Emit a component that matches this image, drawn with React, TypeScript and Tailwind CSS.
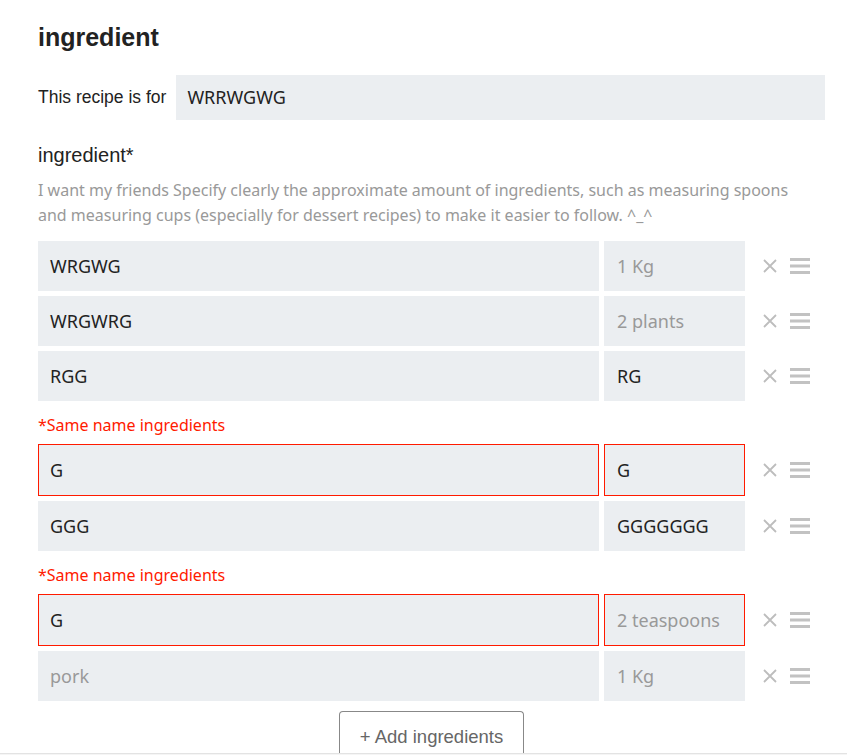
import React from "react";

type Row = {
  name: string;
  amount: string;
  namePlaceholder?: boolean;
  amountPlaceholder?: boolean;
  error?: boolean;
};

const rows: Row[] = [
  { name: "WRGWG", amount: "1 Kg", amountPlaceholder: true },
  { name: "WRGWRG", amount: "2 plants", amountPlaceholder: true },
  { name: "RGG", amount: "RG" },
  { name: "G", amount: "G", error: true },
  { name: "GGG", amount: "GGGGGGG" },
  { name: "G", amount: "2 teaspoons", amountPlaceholder: true, error: true },
  { name: "pork", amount: "1 Kg", namePlaceholder: true, amountPlaceholder: true },
];

function IngredientRow({ row }: { row: Row }) {
  const box = row.error
    ? "h-[52px] border border-[#ff1a00]"
    : "h-[50px] border border-transparent";
  return (
    <div className="flex items-center">
      <div
        className={`flex w-[561px] items-center bg-[#ebeef1] px-[11px] text-[18px] ${box} ${
          row.namePlaceholder ? "text-[#999]" : "text-[#222]"
        }`}
      >
        {row.name}
      </div>
      <div
        className={`ml-[5px] flex w-[141px] items-center bg-[#ebeef1] px-[12px] text-[18px] ${box} ${
          row.amountPlaceholder ? "text-[#999]" : "text-[#222]"
        }`}
      >
        {row.amount}
      </div>
      <div className="ml-[18px] flex items-center gap-[13px]">
        <svg width="14" height="14" viewBox="0 0 14 14">
          <path d="M1 1L13 13M13 1L1 13" stroke="#bdbdbd" strokeWidth="1.8" />
        </svg>
        <svg width="20" height="18" viewBox="0 0 20 18">
          <rect x="0" y="1" width="20" height="3" fill="#c2c2c2" />
          <rect x="0" y="7.5" width="20" height="3" fill="#c2c2c2" />
          <rect x="0" y="14" width="20" height="3" fill="#c2c2c2" />
        </svg>
      </div>
    </div>
  );
}

export default function App() {
  return (
    <div className="relative h-[755px] w-[847px] overflow-hidden bg-white font-['Noto_Sans',sans-serif]">
      <div className="pl-[38px] pr-[22px] pt-[22px]">
        {/* Title */}
        <h2 className="font-['Liberation_Sans',Arial,sans-serif] text-[25px] font-bold leading-[30px] text-[#222]">
          ingredient
        </h2>

        {/* Serves */}
        <div className="mt-[23px] flex items-center">
          <span className="font-['Liberation_Sans',Arial,sans-serif] text-[17.5px] text-[#222]">
            This recipe is for
          </span>
          <div className="ml-[10px] flex h-[45px] flex-1 items-center bg-[#ebeef1] px-[11px] text-[18px] text-[#222]">
            WRRWGWG
          </div>
        </div>

        {/* Ingredient label */}
        <div className="mt-[22px] font-['Liberation_Sans',Arial,sans-serif] text-[20px] leading-[26px] text-[#222]">
          ingredient*
        </div>
        <p className="mt-[10px] w-[770px] text-[16px] leading-[25px] text-[#999]">
          I want my friends Specify clearly the approximate amount of ingredients, such as measuring spoons
          and measuring cups (especially for dessert recipes) to make it easier to follow. ^_^
        </p>

        {/* Rows */}
        <div className="mt-[13px] flex flex-col gap-[5px]">
          {rows.map((row, i) => (
            <React.Fragment key={i}>
              {row.error && (
                <div className="-mb-[5px] flex h-[38px] items-center text-[16px] text-[#ff1a00]">
                  *Same name ingredients
                </div>
              )}
              <IngredientRow row={row} />
            </React.Fragment>
          ))}
        </div>

        {/* Add button */}
        <div className="mt-[10px] flex w-[787px] justify-center">
          <button className="h-[50px] w-[185px] rounded-t-[4px] border border-b-0 border-[#888] font-['Liberation_Sans',Arial,sans-serif] text-[18.5px] text-[#666]">
            + Add ingredients
          </button>
        </div>
      </div>
      <div className="absolute bottom-0 left-0 right-0 h-[2px] border-t border-[#e3e3e3] bg-[#f5f5f5]" />
    </div>
  );
}
